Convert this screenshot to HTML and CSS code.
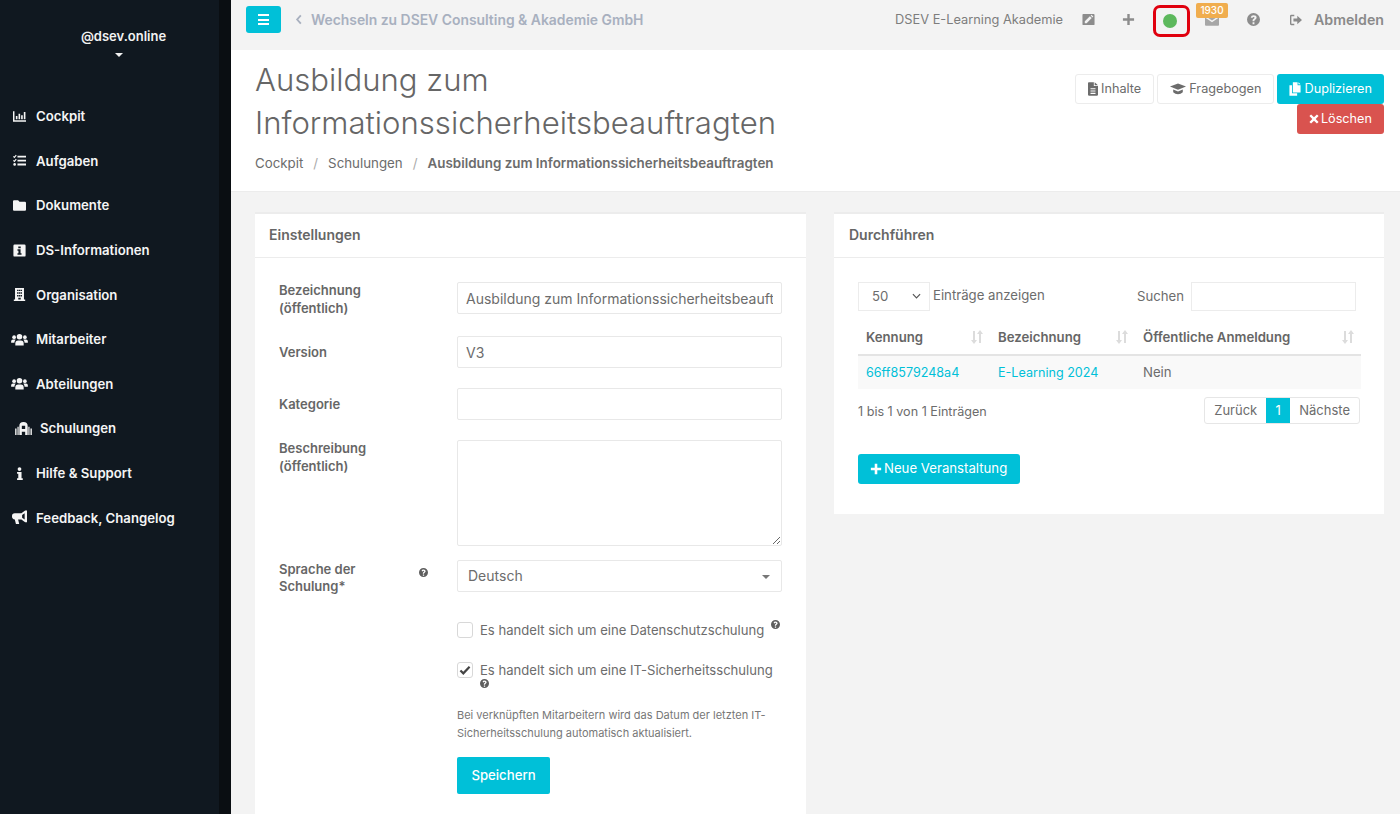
FILE: index.html
```html
<!DOCTYPE html>
<html lang="de">
<head>
<meta charset="utf-8">
<title>Ausbildung zum Informationssicherheitsbeauftragten</title>
<link rel="stylesheet" href="styles.css">
</head>
<body>
<div class="app">
  <aside class="sidebar">
    <div class="user">
      <div class="user-name">@dsev.online</div>
      <span class="caret"></span>
    </div>
    <nav class="nav">
      <a class="nav-item"><svg class="nav-icon" viewBox="0 0 16 16"><path d="M0 1.500h1.800v11.200H16v1.800H0z"/><path d="M3.500 7.500h2v4h-2zM6.800 4.500h2v7h-2zM10 6.500h2v5h-2zM13.300 2.500h2v9h-2z"/></svg>Cockpit</a>
      <a class="nav-item"><svg class="nav-icon" viewBox="0 0 16 16"><path d="M5.500 2.200H16v2.200H5.500zM5.500 7H16v2.200H5.500zM5.500 11.800H16V14H5.500z"/><path d="M.5 3l1.200 1.200L4 1.500" fill="none" stroke="currentColor" stroke-width="1.400"/><path d="M.5 7.800 1.700 9 4 6.300" fill="none" stroke="currentColor" stroke-width="1.400"/><circle cx="2" cy="12.800" r="1.600"/></svg>Aufgaben</a>
      <a class="nav-item"><svg class="nav-icon" viewBox="0 0 16 16"><path d="M1.300 1.500h5l1.700 2h6.700q1.300 0 1.300 1.300v8.400q0 1.300-1.300 1.300H1.300Q0 14.500 0 13.200V2.800q0-1.300 1.300-1.300z"/></svg>Dokumente</a>
      <a class="nav-item"><svg class="nav-icon" viewBox="0 0 16 16"><path fill-rule="evenodd" d="M2 .5h12q1.500 0 1.500 1.500v12q0 1.500-1.500 1.500H2Q.5 15.500.5 14V2Q.5.500 2 .5zM6.500 3v2.300h3V3zM5.500 6.500v1.800h1.200v3.200H5.500v1.800h5v-1.800H9.300v-5z"/></svg>DS-Informationen</a>
      <a class="nav-item"><svg class="nav-icon" viewBox="0 0 16 16"><path fill-rule="evenodd" d="M2.500 0h11v14.200H15V16H1v-1.800h1.500zM5 2v1.800h1.700V2zm2.200 0v1.800h1.700V2zm2.200 0v1.800h1.700V2zM5 5.300v1.800h1.700V5.300zm2.200 0v1.800h1.700V5.300zm2.200 0v1.800h1.700V5.300zM5 8.600v1.800h1.700V8.600zm2.200 0v1.800h1.700V8.600zm2.200 0v1.800h1.700V8.600zM6.500 12v2.200h3V12z"/></svg>Organisation</a>
      <a class="nav-item"><svg class="nav-icon wide" viewBox="0 0 18 14"><circle cx="9" cy="4" r="3"/><circle cx="3.200" cy="4.500" r="2"/><circle cx="14.800" cy="4.500" r="2"/><path d="M4.500 13.500v-2.300q0-3.200 3-3.200h3q3 0 3 3.200v2.300zM0 10.500V9Q0 7 2 7h2.800Q3.500 8.800 3.500 10.500zM18 10.500V9q0-2-2-2h-2.800q1.300 1.800 1.300 3.500z"/></svg>Mitarbeiter</a>
      <a class="nav-item"><svg class="nav-icon wide" viewBox="0 0 18 14"><circle cx="9" cy="4" r="3"/><circle cx="3.200" cy="4.500" r="2"/><circle cx="14.800" cy="4.500" r="2"/><path d="M4.500 13.500v-2.300q0-3.200 3-3.200h3q3 0 3 3.200v2.300zM0 10.500V9Q0 7 2 7h2.800Q3.500 8.800 3.500 10.500zM18 10.500V9q0-2-2-2h-2.800q1.300 1.800 1.300 3.500z"/></svg>Abteilungen</a>
      <a class="nav-item indent"><svg class="nav-icon wide" viewBox="0 0 18 14"><path fill-rule="evenodd" d="M9 0q4.500 0 4.500 4.500V14h-2.700V10.500H7.200V14H4.500V4.500Q4.500 0 9 0zM7.200 4v3.500h3.600V4z"/><path d="M0 7h1.500v7H0zM2.500 5h1.300v9H2.500zM14.200 5h1.300v9h-1.300zM16.500 7H18v7h-1.500z"/></svg>Schulungen</a>
      <a class="nav-item"><svg class="nav-icon" viewBox="0 0 16 16"><circle cx="8" cy="2.500" r="2.300"/><path d="M5 6h5.500v7.700H12V16H5v-2.300h1.500V8.200H5z"/></svg>Hilfe &amp; Support</a>
      <a class="nav-item"><svg class="nav-icon mega" viewBox="0 0 16 16"><path fill-rule="evenodd" d="M14 .5h2v12.500h-2l-4-3H6.500l1.200 5H4.200L3 10Q0 10 0 7V6.500Q0 3.500 3 3.500h7zM13.500 3.500 10.800 5.300v3l2.700 1.900z"/></svg>Feedback, Changelog</a>
    </nav>
  </aside>

  <div class="main">
    <header class="topbar">
      <div class="topbar-left">
        <button class="burger" type="button" aria-label="Menü"><span></span><span></span><span></span></button>
        <a class="switch"><svg class="chev" viewBox="0 0 8 12"><path d="M6 1.500 2 6l4 4.500" fill="none" stroke="currentColor" stroke-width="2"/></svg>Wechseln zu DSEV Consulting &amp; Akademie GmbH</a>
      </div>
      <div class="topbar-right">
        <span class="org">DSEV E-Learning Akademie</span>
        <svg class="tb-icon edit" viewBox="0 0 14 14"><path fill-rule="evenodd" d="M1.500 1h11q1 0 1 1v10q0 1-1 1h-11q-1 0-1-1V2q0-1 1-1zM3 11h2l5.500-5.500-2-2L3 9zM9.300 2.800l2 2 .9-.9-2-2z"/></svg>
        <svg class="tb-icon plus" viewBox="0 0 14 14"><path d="M5.700 1h2.600v4.700H13v2.600H8.300V13H5.700V8.300H1V5.700h4.700z"/></svg>
        <span class="status"><span class="dot"></span></span>
        <span class="mail"><svg class="tb-icon mail-icon" viewBox="0 0 16 13"><path d="M1 0h14q1 0 1 1v.5L8 7 0 1.500V1q0-1 1-1zM0 3.500 8 9l8-5.500V12q0 1-1 1H1q-1 0-1-1z"/></svg><span class="badge">1930</span></span>
        <svg class="tb-icon help" viewBox="0 0 14 14"><use href="#q"/></svg>
        <a class="logout"><svg class="logout-icon" viewBox="0 0 16 14"><path d="M6 1H2.500Q1 1 1 2.500v9Q1 13 2.500 13H6v-1.600H2.600V2.600H6z"/><path d="M9.500 2l5.500 5-5.500 5V8.700H5V5.300h4.500z"/></svg>Abmelden</a>
      </div>
    </header>

    <section class="page-head">
      <div class="head-text">
        <h1 class="title">Ausbildung zum Informationssicherheitsbeauftragten</h1>
        <ol class="crumbs">
          <li>Cockpit</li>
          <li>Schulungen</li>
          <li class="current">Ausbildung zum Informationssicherheitsbeauftragten</li>
        </ol>
      </div>
      <div class="head-actions">
        <a class="btn btn-white"><svg class="btn-icon i-doc" viewBox="0 0 12 16"><path fill-rule="evenodd" d="M1 0h6v4.500h5V15q0 1-1 1H1q-1 0-1-1V1q0-1 1-1zM3 7v1.300h6V7zm0 2.800v1.300h6V9.800zm0 2.800v1.300h6v-1.300zM8 0l4 3.500H8z"/></svg>Inhalte</a>
        <a class="btn btn-white"><svg class="btn-icon i-cap" viewBox="0 0 20 14"><path d="M10 0l10 4-10 4L0 4z"/><path d="M4 7.500 10 10l6-2.500V11q-2.500 2.500-6 2.500T4 11z"/></svg>Fragebogen</a>
        <a class="btn btn-cyan"><svg class="btn-icon i-copy" viewBox="0 0 14 16"><path d="M4.500 0H10v3.500h3.500V12h-9z"/><path d="M11 0l2.500 2.500H11zM3.500 3.500H.5V16h9v-3H3.500z"/></svg>Duplizieren</a>
        <a class="btn btn-red"><svg class="btn-icon i-x" viewBox="0 0 12 12"><path d="M2.500.5 6 4 9.500.5l2 2L8 6l3.500 3.500-2 2L6 8l-3.500 3.500-2-2L4 6 .5 2.500z"/></svg>Löschen</a>
      </div>
    </section>

    <div class="content">
      <section class="panel panel-left">
        <h2 class="panel-title">Einstellungen</h2>
        <form class="form">
          <div class="row r-first">
            <label class="label">Bezeichnung (öffentlich)</label>
            <input class="input" type="text" value="Ausbildung zum Informationssicherheitsbeauftragten">
          </div>
          <div class="row">
            <label class="label one">Version</label>
            <input class="input" type="text" value="V3">
          </div>
          <div class="row">
            <label class="label one">Kategorie</label>
            <input class="input" type="text">
          </div>
          <div class="row r-desc">
            <label class="label">Beschreibung (öffentlich)</label>
            <textarea class="input area"></textarea>
          </div>
          <div class="row r-lang">
            <label class="label lang"><span>Sprache der Schulung*</span><svg class="q q-lang" viewBox="0 0 14 14"><use href="#q"/></svg></label>
            <div class="input select">Deutsch<span class="select-caret"></span></div>
          </div>
          <div class="checks">
            <div class="check r-c1"><span class="box"></span><span class="check-text">Es handelt sich um eine Datenschutzschulung<svg class="q q-sup" viewBox="0 0 14 14"><use href="#q"/></svg></span></div>
            <div class="check r-c2"><span class="box"><svg class="tick" viewBox="0 0 14 12"><path d="M1.500 6.500 5 10l7.500-8" fill="none" stroke="currentColor" stroke-width="2.600"/></svg></span><span class="check-text">Es handelt sich um eine IT-Sicherheitsschulung <svg class="q q-line" viewBox="0 0 14 14"><use href="#q"/></svg></span></div>
            <p class="hint">Bei verknüpften Mitarbeitern wird das Datum der letzten IT-Sicherheitsschulung automatisch aktualisiert.</p>
            <button class="btn-save" type="button">Speichern</button>
          </div>
        </form>
      </section>

      <section class="panel panel-right">
        <h2 class="panel-title">Durchführen</h2>
        <div class="table-wrap">
          <div class="tools">
            <div class="length"><div class="length-select">50<svg class="chev-down" viewBox="0 0 10 6"><path d="M1 1l4 4 4-4" fill="none" stroke="currentColor" stroke-width="1.300"/></svg></div><span>Einträge anzeigen</span></div>
            <div class="search"><span>Suchen</span><div class="search-input"></div></div>
          </div>
          <table class="table">
            <thead>
              <tr>
                <th class="c1">Kennung<svg class="sort" viewBox="0 0 14 14"><path d="M3 1h2v9h2L4 14 1 10h2zM9 13h2V4h2L10 0 7 4h2z"/></svg></th>
                <th class="c2">Bezeichnung<svg class="sort" viewBox="0 0 14 14"><path d="M3 1h2v9h2L4 14 1 10h2zM9 13h2V4h2L10 0 7 4h2z"/></svg></th>
                <th class="c3">Öffentliche Anmeldung<svg class="sort" viewBox="0 0 14 14"><path d="M3 1h2v9h2L4 14 1 10h2zM9 13h2V4h2L10 0 7 4h2z"/></svg></th>
              </tr>
            </thead>
            <tbody>
              <tr><td><a class="link">66ff8579248a4</a></td><td><a class="link">E-Learning 2024</a></td><td>Nein</td></tr>
            </tbody>
          </table>
          <div class="foot">
            <span class="info">1 bis 1 von 1 Einträgen</span>
            <div class="pager"><span class="pg">Zurück</span><span class="pg on">1</span><span class="pg">Nächste</span></div>
          </div>
          <a class="btn btn-cyan btn-new"><svg class="btn-icon i-plus" viewBox="0 0 14 14"><path d="M5.500 1h3v4.500H13v3H8.500V13h-3V8.500H1v-3h4.500z"/></svg>Neue Veranstaltung</a>
        </div>
      </section>
    </div>
  </div>
</div>
<svg class="defs" width="0" height="0" aria-hidden="true"><defs><path id="q" fill-rule="evenodd" d="M7 0a7 7 0 1 1 0 14A7 7 0 0 1 7 0zM6 10v2h2v-2zM7 2.500q-2.500 0-3 2.300l1.800.5q.2-1 1.200-1 1.100 0 1.100.8 0 .6-.9 1.100Q6 6.800 6 8v1h2v-.7q0-.5.8-1 1.500-.9 1.500-2.200 0-2.600-3.300-2.600z"/></defs></svg>
</body>
</html>
```
FILE: styles.css
```css
* { box-sizing: border-box; }
html, body { margin: 0; height: 100%; overflow: hidden; }
body { font-family: "Inter", "Open Sans", sans-serif; font-size: 13.2px; color: #6c6c6c; background: #f3f3f3; }
svg { fill: currentColor; flex: none; }
.defs { position: absolute; }
.app { display: flex; height: 814px; overflow: hidden; }

.sidebar { width: 231px; flex: none; background: #101820; border-right: 12px solid #0a0e12; color: #f2f2f2; }
.user { height: 94px; padding-top: 27px; display: flex; flex-direction: column; align-items: center; padding-left: 28px; }
.user-name { font-weight: 600; font-size: 13px; line-height: 18px; }
.caret { width: 0; height: 0; margin-top: 8px; margin-right: 10px; border: 4px solid transparent; border-top: 4px solid #f2f2f2; border-bottom: 0; }
.nav { display: flex; flex-direction: column; }
.nav-item { height: 44.6px; display: flex; align-items: center; padding-left: 13px; font-weight: 600; font-size: 13.2px; color: #f5f5f5; }
.nav-item.indent { padding-left: 15px; }
.nav-icon { width: 13px; height: 13px; margin-right: 10px; }
.nav-icon.wide { width: 17px; height: 13px; margin-left: -2px; margin-right: 8px; }
.nav-icon.mega { width: 15px; height: 15px; margin-left: -1px; margin-right: 9px; }
.nav-item.indent .nav-icon { width: 17px; margin-left: 0; margin-right: 8px; }

.main { flex: 1; min-width: 0; display: flex; flex-direction: column; }
.topbar { height: 50px; flex: none; display: flex; justify-content: space-between; background: #f3f3f3; padding: 6px 16px 0 15px; }
.topbar-left { display: flex; align-items: flex-start; }
.burger { width: 35px; height: 27px; border: 0; border-radius: 3px; background: #00c0d8; display: flex; flex-direction: column; align-items: center; justify-content: center; gap: 2.500px; padding: 0; }
.burger span { width: 11px; height: 2px; background: #fff; }
.switch { display: flex; align-items: center; height: 27px; margin-left: 14px; font-weight: 600; font-size: 13.9px; color: #a8b0bf; }
.chev { width: 8px; height: 11px; margin-right: 8px; }
.topbar-right { display: flex; align-items: flex-start; color: #8a8a8a; }
.org { font-size: 12.8px; line-height: 27px; margin-right: 19px; color: #7d7d7d; }
.tb-icon { color: #8c8c8c; }
.edit { width: 13px; height: 13px; margin: 7px 0 0 0; }
.plus { width: 13px; height: 13px; margin: 7px 0 0 27px; }
.status { width: 37px; height: 32px; margin: -1px 0 0 18px; padding-right: 3px; border: 3px solid #e0000e; border-radius: 7px; display: flex; align-items: center; justify-content: center; }
.dot { width: 14px; height: 14px; border-radius: 50%; background: #5cb85c; }
.mail { position: relative; width: 16px; height: 27px; margin-left: 15px; display: block; }
.mail-icon { width: 14px; height: 12px; position: absolute; left: 0; top: 8px; color: #a6a6a6; }
.badge { position: absolute; left: -9px; top: -3px; width: 32px; height: 15px; border-radius: 2px; background: #f0ad4e; color: #fff; font-size: 10px; font-weight: 500; line-height: 15px; text-align: center; }
.help { width: 13px; height: 13px; margin: 7px 0 0 26px; }
.logout { display: flex; align-items: center; height: 27px; margin-left: 29px; font-weight: 600; font-size: 14.200px; color: #8a8a8a; }
.logout-icon { width: 14px; height: 12px; margin-right: 11px; }

.page-head { height: 142px; flex: none; background: #fff; border-bottom: 1px solid #ececec; padding: 9px 16px 0 24px; display: flex; justify-content: space-between; }
.head-text { width: 540px; flex: none; }
.title { margin: 0; font-weight: 300; font-size: 31.100px; line-height: 43px; color: #666; }
.crumbs { list-style: none; margin: 8px 0 0; padding: 0; display: flex; font-size: 13.3px; line-height: 20px; white-space: nowrap; color: #6c6c6c; }
.crumbs li + li::before { content: "/"; margin: 0 10px; color: #aaa; font-weight: 400; }
.crumbs .current { font-weight: 600; font-size: 13.4px; }
.head-actions { width: 330px; display: flex; flex-wrap: wrap; justify-content: flex-end; align-content: flex-start; gap: 0 3px; margin-top: 15px; }
.btn { display: inline-flex; align-items: center; height: 30px; padding: 0 12px; border-radius: 3px; font-size: 12.7px; line-height: 1; white-space: nowrap; }
.btn-white { background: #fff; border: 1px solid #ececec; color: #6c6c6c; }
.btn-cyan { background: #00c0d8; color: #fff; }
.btn-red { background: #d9534f; color: #fff; }
.btn-icon { margin-right: 3px; }
.i-doc { width: 10px; height: 14px; }
.i-cap { width: 16px; height: 12px; }
.i-copy { width: 12px; height: 14px; }
.i-x { width: 10px; height: 10px; margin-right: 2px; }
.i-plus { width: 12px; height: 12px; margin-right: 2px; }

.content { flex: 1; min-height: 0; overflow: hidden; padding: 20px 16px 0 24px; display: flex; align-items: flex-start; gap: 28px; }
.panel { background: #fff; border-top: 2px solid #ececec; }
.panel-left { width: 551px; align-self: stretch; }
.panel-right { width: 550px; height: 302px; }
.panel-title { margin: 0; height: 44px; padding: 0 14px; border-bottom: 1px solid #ececec; font-size: 14px; font-weight: 600; line-height: 41px; color: #666; }
.panel-right .panel-title { padding-left: 15px; }

.form { padding: 24px 24px 0; }
.row { display: grid; grid-template-columns: 178px 325px; align-items: start; margin-bottom: 20px; }
.r-first { height: 32px; margin-bottom: 22px; }
.r-desc { margin-bottom: 14px; }
.label { font-weight: 600; font-size: 13px; line-height: 17.500px; padding-right: 50px; color: #666; }
.label.one { line-height: 32px; }
.label.lang { display: flex; justify-content: space-between; padding-top: 1px; padding-right: 29px; line-height: 17px; }
.label.lang span { width: 100px; }
.input { display: block; width: 100%; height: 32px; border: 1px solid #e8e8e8; border-radius: 2px; padding: 0 8px; background: #fff; font: inherit; font-size: 14px; color: #6c6c6c; outline: 0; }
.area { height: 106px; }
.select { position: relative; display: flex; align-items: center; padding: 0 0 2px 10px; }
.select-caret { position: absolute; right: 11px; top: 14px; border: 4px solid transparent; border-top: 4px solid #777; border-bottom: 0; }
.q { width: 9px; height: 9px; color: #5e5e5e; }
.q-lang { margin-top: 7px; }
.q-sup { position: relative; top: -6px; margin-left: 7px; }
.q-line { display: block; margin-top: 1px; }

.checks { margin-left: 178px; padding-top: 7px; }
.check { display: flex; align-items: flex-start; }
.r-c1 { height: 40px; }
.r-c2 { height: 44px; }
.box { width: 16px; height: 16px; margin-right: 7px; border: 1px solid #d8d8d8; border-radius: 3px; background: #fff; display: flex; align-items: center; justify-content: center; color: #444; flex: none; }
.tick { width: 12px; height: 10px; }
.check-text { font-size: 13.100px; line-height: 16px; white-space: nowrap; }
.hint { margin: 0 0 15px; font-size: 11px; line-height: 18px; width: 325px; color: #777; }
.btn-save { width: 93px; height: 37px; border: 0; border-radius: 2px; background: #00c0d8; color: #fff; font: inherit; font-size: 13.2px; font-weight: 500; padding: 0 0 2px; }

.table-wrap { padding: 24px 24px 0; }
.tools { display: flex; justify-content: space-between; height: 29px; }
.length { display: flex; align-items: center; gap: 3px; }
.length > span { margin-bottom: 3px; }
.length-select { width: 72px; height: 29px; border: 1px solid #ececec; padding: 0 8px 2px 13px; display: flex; align-items: center; justify-content: space-between; }
.chev-down { width: 9px; height: 6px; color: #555; }
.search { display: flex; align-items: center; gap: 7px; margin-right: 4px; }
.search > span { margin-bottom: 2px; }
.search-input { width: 165px; height: 29px; border: 1px solid #ececec; }
.table { width: 503px; border-collapse: collapse; table-layout: fixed; margin-top: 9px; }
.table th { position: relative; height: 35px; padding: 0 0 0 8px; text-align: left; font-weight: 600; font-size: 13.2px; color: #666; border-bottom: 2px solid #e4e4e4; }
.table td { height: 34px; padding: 0 0 2px 8px; background: #f9f9f9; font-size: 13.2px; }
.c1 { width: 132px; }
.c2 { width: 145px; }
.sort { position: absolute; right: 6px; top: 10px; width: 14px; height: 14px; color: #dcdcdc; }
.link { color: #00c0d8; font-size: 12.600px; }
.foot { display: flex; justify-content: space-between; align-items: center; height: 28px; margin-top: 7px; }
.info { font-size: 12.600px; margin-top: 2px; }
.pager { display: flex; height: 27px; border: 1px solid #e6e6e6; border-radius: 3px; overflow: hidden; }
.pg { padding: 0 9px; line-height: 25px; font-size: 13px; }
.pg.on { width: 24px; padding: 0; background: #00c0d8; color: #fff; text-align: center; }
.btn-new { margin-top: 30px; font-size: 13.2px; padding: 0 13px 0 12px; }
```
